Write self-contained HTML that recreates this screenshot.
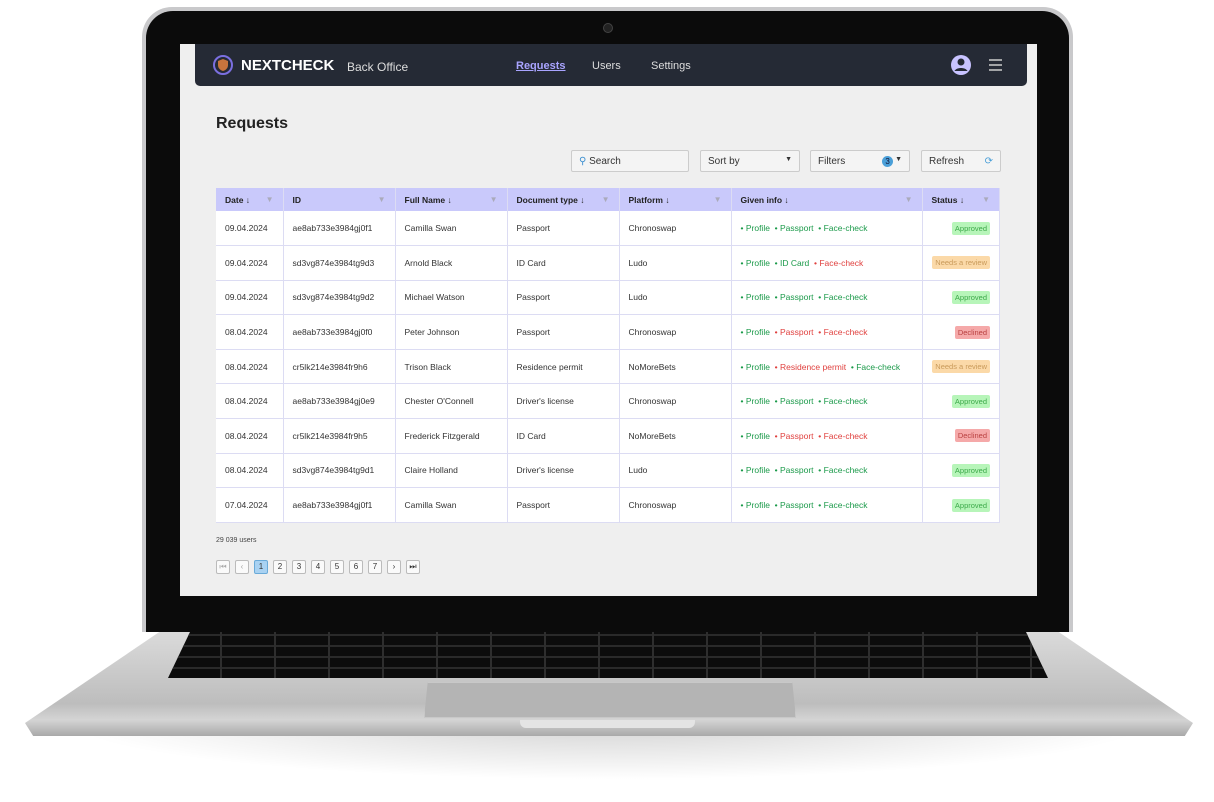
<!DOCTYPE html>
<html><head><meta charset="utf-8"><style>
*{margin:0;padding:0;box-sizing:border-box}
body{width:1214px;height:802px;background:#fff;position:relative;overflow:hidden;font-family:"Liberation Sans",Arial,sans-serif}
.abs{position:absolute}
.lid{left:142px;top:7px;width:931px;height:625px;border-radius:30px 30px 0 0;background:#c9c9cb}
.bezel{left:146px;top:11px;width:923px;height:621px;border-radius:27px 27px 0 0;background:#0b0b0b}
.screen{left:180px;top:44px;width:857px;height:552px;background:#efefef;overflow:hidden}
.hdr{left:15px;top:0;width:832px;height:42px;background:#252a35;border-radius:0 0 5px 5px;color:#fff}
.base{left:25px;top:628px;width:1168px;height:108px;background:linear-gradient(#dcdcdc,#bdbdbd 70%,#d4d4d4 85%,#a9a9a9);clip-path:polygon(12% 0,88% 0,100% 88%,99.3% 100%,0.7% 100%,0 88%)}
.kb{left:168px;top:632px;width:880px;height:46px;background:#0c0c0c;clip-path:polygon(2.5% 0,97.5% 0,100% 100%,0 100%);
background-image:repeating-linear-gradient(90deg,transparent 0 52px,#2e2e2e 52px 54px),repeating-linear-gradient(0deg,transparent 0 9px,#2a2a2a 9px 11px)}
.pad{left:424px;top:682px;width:372px;height:36px;background:#b4b4b4;border:1px solid #c8c8c8;clip-path:polygon(1% 0,99% 0,100% 100%,0 100%)}
th,td{font-size:8.5px;color:#333;text-align:left;padding:0 9px;border-right:1px solid #dcdcf3;white-space:nowrap}
table{position:absolute;left:36px;top:144px;width:784px;border-collapse:collapse;background:#fff}
th{background:#c9c9fb;height:23px;font-weight:bold;color:#222;position:relative}
td{height:34.6px;border-bottom:1px solid #dcdcf3}
td:last-child{padding:0 9px 0 0}
.f{position:absolute;right:9px;top:7px;color:#aab;font-size:8px}
.g{color:#1b9a4a}.r{color:#e0413f}
.b{display:inline-block;font-size:7.5px;padding:2px 3px;border-radius:2px;float:right;white-space:nowrap}
.ap{background:#b7f5b9;color:#3daa4a}.nr{background:#fbd9a8;color:#c99a5a}.dc{background:#f5a9a9;color:#b94040}
.btn{position:absolute;top:106px;height:22px;background:#f4f4f4;border:1px solid #ccc;border-radius:2px;font-size:10px;color:#333;padding:5px 7px}
.pg{position:absolute;top:516px;width:14px;height:14px;border:1px solid #bbb;background:#fafafa;font-size:8px;text-align:center;line-height:12px;color:#333;border-radius:2px}
</style></head><body>
<div class="abs" style="left:60px;top:720px;width:1100px;height:60px;background:radial-gradient(ellipse at center top,rgba(0,0,0,.18),rgba(0,0,0,0) 70%)"></div>
<div class="abs base"></div>
<div class="abs" style="left:520px;top:720px;width:175px;height:8px;background:#e4e4e4;border-radius:0 0 6px 6px"></div>
<div class="abs kb"></div>
<div class="abs pad"></div>
<div class="abs lid"></div>
<div class="abs bezel"></div>
<div class="abs" style="left:603px;top:23px;width:10px;height:10px;border-radius:50%;background:#222;border:1px solid #444"></div>
<div class="abs screen">
 <div class="abs hdr">
  <svg class="abs" style="left:17px;top:10px" width="22" height="22" viewBox="0 0 22 22"><circle cx="11" cy="11" r="9" fill="none" stroke="#7b6fe0" stroke-width="2"/><path d="M11 5l5 2v4c0 3-2 5-5 6-3-1-5-3-5-6V7z" fill="#c7743d"/></svg>
  <div class="abs" style="left:46px;top:13px;font-size:15px;font-weight:bold">NEXTCHECK</div>
  <div class="abs" style="left:152px;top:16px;font-size:12px;color:#ddd">Back Office</div>
  <div class="abs" style="left:321px;top:16px;font-size:11px;color:#a9a4ff;text-decoration:underline;font-weight:bold">Requests</div>
  <div class="abs" style="left:397px;top:16px;font-size:11px;color:#ddd">Users</div>
  <div class="abs" style="left:456px;top:16px;font-size:11px;color:#ddd">Settings</div>
  <svg class="abs" style="left:755px;top:10px" width="22" height="22" viewBox="0 0 22 22"><circle cx="11" cy="11" r="10" fill="#c8c3ff"/><circle cx="11" cy="8" r="3.5" fill="#252a35"/><path d="M4.5 17c2-4 11-4 13 0" fill="#252a35"/></svg>
  <svg class="abs" style="left:793px;top:15px" width="15" height="12"><path d="M1 1h13M1 6h13M1 11h13" stroke="#ccc" stroke-width="1.5"/></svg>
 </div>
 <div class="abs" style="left:36px;top:71px;font-size:16px;font-weight:bold;color:#222">Requests</div>
 <div class="btn" style="left:391px;width:118px"><span style="color:#3b8fd0">&#9906;</span> Search</div>
 <div class="btn" style="left:520px;width:100px">Sort by<span style="float:right;font-size:7px">▼</span></div>
 <div class="btn" style="left:630px;width:100px">Filters<span style="float:right;font-size:7px">&nbsp;▼</span><span style="float:right;background:#4a9fd8;color:#113;border-radius:50%;width:11px;height:11px;font-size:8px;text-align:center;line-height:11px">3</span></div>
 <div class="btn" style="left:741px;width:80px">Refresh<span style="float:right;color:#4a9fd8">&#10227;</span></div>
 <table>
  <tr><th style="width:67px">Date ↓<span class="f">▼</span></th><th style="width:112px">ID<span class="f">▼</span></th><th style="width:112px">Full Name ↓<span class="f">▼</span></th><th style="width:112px">Document type ↓<span class="f">▼</span></th><th style="width:112px">Platform ↓<span class="f">▼</span></th><th style="width:191px">Given info ↓<span class="f">▼</span></th><th>Status ↓<span class="f">▼</span></th></tr>
  <tr><td>09.04.2024</td><td>ae8ab733e3984gj0f1</td><td>Camilla Swan</td><td>Passport</td><td>Chronoswap</td><td class="g">• Profile &nbsp;• Passport &nbsp;• Face-check</td><td><span class="b ap">Approved</span></td></tr>
  <tr><td>09.04.2024</td><td>sd3vg874e3984tg9d3</td><td>Arnold Black</td><td>ID Card</td><td>Ludo</td><td class="g">• Profile &nbsp;• ID Card &nbsp;<span class="r">• Face-check</span></td><td><span class="b nr">Needs a review</span></td></tr>
  <tr><td>09.04.2024</td><td>sd3vg874e3984tg9d2</td><td>Michael Watson</td><td>Passport</td><td>Ludo</td><td class="g">• Profile &nbsp;• Passport &nbsp;• Face-check</td><td><span class="b ap">Approved</span></td></tr>
  <tr><td>08.04.2024</td><td>ae8ab733e3984gj0f0</td><td>Peter Johnson</td><td>Passport</td><td>Chronoswap</td><td class="g">• Profile &nbsp;<span class="r">• Passport &nbsp;• Face-check</span></td><td><span class="b dc">Declined</span></td></tr>
  <tr><td>08.04.2024</td><td>cr5lk214e3984fr9h6</td><td>Trison Black</td><td>Residence permit</td><td>NoMoreBets</td><td class="g">• Profile &nbsp;<span class="r">• Residence permit</span> &nbsp;• Face-check</td><td><span class="b nr">Needs a review</span></td></tr>
  <tr><td>08.04.2024</td><td>ae8ab733e3984gj0e9</td><td>Chester O'Connell</td><td>Driver's license</td><td>Chronoswap</td><td class="g">• Profile &nbsp;• Passport &nbsp;• Face-check</td><td><span class="b ap">Approved</span></td></tr>
  <tr><td>08.04.2024</td><td>cr5lk214e3984fr9h5</td><td>Frederick Fitzgerald</td><td>ID Card</td><td>NoMoreBets</td><td class="g">• Profile &nbsp;<span class="r">• Passport &nbsp;• Face-check</span></td><td><span class="b dc">Declined</span></td></tr>
  <tr><td>08.04.2024</td><td>sd3vg874e3984tg9d1</td><td>Claire Holland</td><td>Driver's license</td><td>Ludo</td><td class="g">• Profile &nbsp;• Passport &nbsp;• Face-check</td><td><span class="b ap">Approved</span></td></tr>
  <tr><td>07.04.2024</td><td>ae8ab733e3984gj0f1</td><td>Camilla Swan</td><td>Passport</td><td>Chronoswap</td><td class="g">• Profile &nbsp;• Passport &nbsp;• Face-check</td><td><span class="b ap">Approved</span></td></tr>
 </table>
 <div class="abs" style="left:36px;top:493px;font-size:7px;color:#444">29 039 users</div>
 <div class="pg" style="left:36px;color:#aaa">⏮</div><div class="pg" style="left:55px;color:#aaa">‹</div>
 <div class="pg" style="left:74px;background:#a9d2f2;border-color:#6aaad8">1</div>
 <div class="pg" style="left:93px">2</div><div class="pg" style="left:112px">3</div><div class="pg" style="left:131px">4</div><div class="pg" style="left:150px">5</div><div class="pg" style="left:169px">6</div><div class="pg" style="left:188px">7</div><div class="pg" style="left:207px">›</div><div class="pg" style="left:226px">⏭</div>
</div>
</body></html>
